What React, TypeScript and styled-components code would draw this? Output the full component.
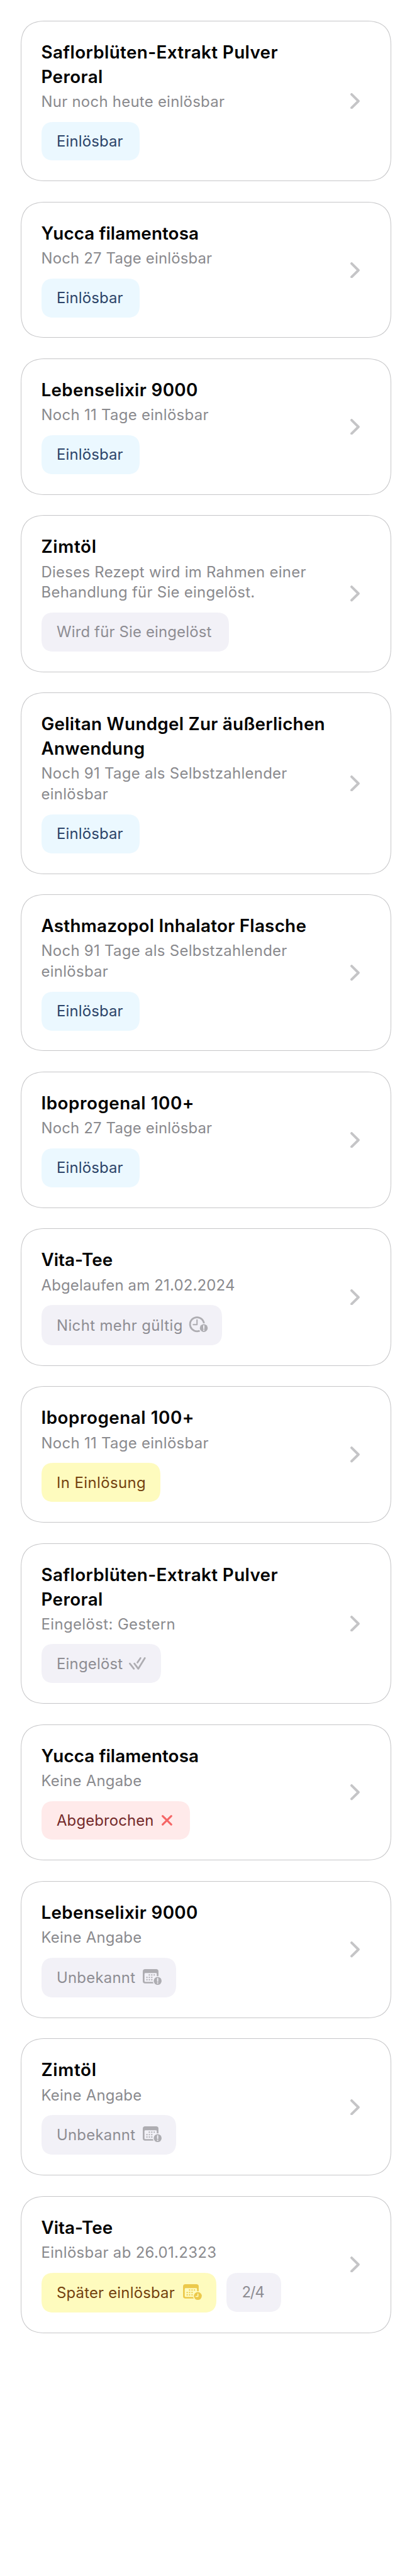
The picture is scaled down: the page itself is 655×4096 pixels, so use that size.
import React from 'react';
import styled, { createGlobalStyle } from 'styled-components';

const GlobalStyle = createGlobalStyle`
  body {
    margin: 0;
    background: #fff;
    font-family: Inter, 'Liberation Sans', sans-serif;
  }
`;

type Tone = 'blue' | 'gray' | 'yellow' | 'red';
type IconName = 'clockAlert' | 'doubleCheck' | 'cross' | 'calendarAlert' | 'calendarClock';

const tones: Record<Tone, { bg: string; fg: string; icon: string }> = {
  blue: { bg: '#ebf8ff', fg: '#2c4469', icon: '#2c4469' },
  gray: { bg: '#f2f1f7', fg: '#8e8d93', icon: '#aeadb2' },
  yellow: { bg: '#fefbbe', fg: '#74420f', icon: '#ecc94b' },
  red: { bg: '#ffeaea', fg: '#742a2a', icon: '#f56565' },
};

const List = styled.main`
  box-sizing: border-box;
  min-height: 4096px;
  padding: 32.75px;
  display: flex;
  flex-direction: column;
  gap: 32.58px;
`;

const Card = styled.article`
  flex: none;
  padding: 30px 48.8px 31.9px 31.75px;
  border: 1px solid #c6c6c8;
  border-radius: 41px;
  corner-shape: superellipse(1.38);
  display: flex;
  align-items: stretch;
  justify-content: space-between;
`;

const Content = styled.div`
  display: flex;
  flex-direction: column;
`;

const Title = styled.h2<{ $tracking: number }>`
  margin: 0;
  font-size: 27.8px;
  line-height: 38.9px;
  font-weight: 600;
  letter-spacing: ${(p) => p.$tracking}px;
  color: #000;
  white-space: pre;
`;

const Subtitle = styled.p<{ $tracking: number }>`
  margin: 4.4px 0 0;
  font-size: 23.9px;
  line-height: 32.75px;
  letter-spacing: ${(p) => p.$tracking}px;
  color: #8a8a8e;
  white-space: pre;
`;

const Pills = styled.div`
  margin-top: 14.8px;
  display: flex;
  align-items: flex-start;
  gap: 16.3px;
`;

const Pill = styled.span<{
  $tone: Tone;
  $width: number;
  $height?: number;
  $inset?: number;
  $tracking?: number;
}>`
  box-sizing: border-box;
  width: ${(p) => p.$width}px;
  height: ${(p) => p.$height ?? 61.9}px;
  padding: 0 ${(p) => p.$inset ?? 0}px 0 24.5px;
  border-radius: 20.5px;
  corner-shape: superellipse(1.38);
  display: flex;
  align-items: center;
  justify-content: space-between;
  font-size: 23.9px;
  letter-spacing: ${(p) => p.$tracking ?? 0.17}px;
  white-space: nowrap;
  background: ${(p) => tones[p.$tone].bg};
  color: ${(p) => tones[p.$tone].fg};
`;

const Glyph = styled.svg<{ $tone: Tone; $w: number; $h: number }>`
  flex: none;
  width: ${(p) => p.$w * 0.6823}px;
  height: ${(p) => p.$h * 0.6823}px;
  overflow: visible;
  color: ${(p) => tones[p.$tone].icon};
  --cutout: ${(p) => tones[p.$tone].bg};
`;

const Chevron = styled.svg`
  align-self: center;
  flex: none;
  width: 15px;
  height: 25.4px;
  /* content padding differs between top and bottom, so recentre on the card */
  margin-top: 2px;
`;

const AlertMark = () => (
  <>
    <path d="M0 -5.3V0.9" stroke="var(--cutout)" strokeWidth="2.9" strokeLinecap="round" />
    <circle cy="4.9" r="1.7" fill="var(--cutout)" />
  </>
);

const ClockMark = () => (
  <path
    d="M0.2 -5V1H-4.6"
    fill="none"
    stroke="var(--cutout)"
    strokeWidth="2.2"
    strokeLinecap="round"
    strokeLinejoin="round"
  />
);

const Badge = ({ x, y, children }: { x: number; y: number; children: React.ReactNode }) => (
  <g transform={`translate(${x} ${y})`}>
    <circle r="11.3" fill="var(--cutout)" />
    <circle r="9.2" fill="currentColor" />
    {children}
  </g>
);

const calendarDots = [
  [15.3, 13.7], [21, 13.7], [26.7, 13.7],
  [9.7, 19.3], [15.3, 19.3], [21, 19.3],
  [9.7, 24.8], [15.3, 24.8], [21, 24.8],
];

const Calendar = () => (
  <>
    <rect width="36.5" height="33.5" rx="5.5" fill="currentColor" />
    <rect x="4" y="9.3" width="28.6" height="20.4" rx="2" fill="var(--cutout)" />
    {calendarDots.map(([x, y]) => (
      <rect key={`${x}-${y}`} x={x - 1.5} y={y - 1.5} width="3" height="3" rx="0.6" fill="currentColor" />
    ))}
  </>
);

const glyphs: Record<IconName, { w: number; h: number; inset: number; art: React.ReactNode }> = {
  clockAlert: {
    w: 42.9,
    h: 40,
    inset: 22.3,
    art: (
      <>
        <circle cx="17.9" cy="18.6" r="16.3" fill="none" stroke="currentColor" strokeWidth="4" />
        <path
          d="M17.9 8.3V19.4H9.2"
          fill="none"
          stroke="currentColor"
          strokeWidth="3"
          strokeLinecap="round"
          strokeLinejoin="round"
        />
        <Badge x={33.7} y={27.4}><AlertMark /></Badge>
      </>
    ),
  },
  doubleCheck: {
    w: 39.3,
    h: 30,
    inset: 24.4,
    art: (
      <path
        d="M2 14.9L11.5 27M12.6 14.9L21.7 27L37 2.2M26.9 2.2L19.8 12.6"
        fill="none"
        stroke="currentColor"
        strokeWidth="4"
        strokeLinecap="round"
        strokeLinejoin="round"
      />
    ),
  },
  cross: {
    w: 24.7,
    h: 25,
    inset: 27.5,
    art: (
      <path
        d="M2.3 2.3L22.4 22.2M22.4 2.3L2.3 22.2"
        fill="none"
        stroke="currentColor"
        strokeWidth="4.6"
        strokeLinecap="round"
      />
    ),
  },
  calendarAlert: {
    w: 44,
    h: 39.6,
    inset: 23.4,
    art: (<><Calendar /><Badge x={34.7} y={27.4}><AlertMark /></Badge></>),
  },
  calendarClock: {
    w: 43.8,
    h: 39.6,
    inset: 23.3,
    art: (<><Calendar /><Badge x={34.5} y={27.6}><ClockMark /></Badge></>),
  },
};

interface Status {
  label: string;
  tone: Tone;
  width: number;
  height?: number;
  tracking?: number;
  icon?: IconName;
}

interface Prescription {
  title: string;
  titleTracking: number;
  info: string;
  infoTracking: number;
  pills: Status[];
}

const redeemable: Status = { label: 'Einlösbar', tone: 'blue', width: 156.2 };
const unknown: Status = {
  label: 'Unbekannt', tone: 'gray', width: 214.9, height: 63.1, tracking: 0.24, icon: 'calendarAlert',
};

const prescriptions: Prescription[] = [
  { title: 'Saflorblüten-Extrakt Pulver\nPeroral', titleTracking: 0.38, info: 'Nur noch heute einlösbar', infoTracking: 0.28, pills: [redeemable] },
  { title: 'Yucca filamentosa', titleTracking: 0.09, info: 'Noch 27 Tage einlösbar', infoTracking: 0.18, pills: [redeemable] },
  { title: 'Lebenselixir 9000', titleTracking: 0.36, info: 'Noch 11 Tage einlösbar', infoTracking: 0.32, pills: [redeemable] },
  {
    title: 'Zimtöl', titleTracking: 0.66,
    info: 'Dieses Rezept wird im Rahmen einer\nBehandlung für Sie eingelöst.', infoTracking: 0.29,
    pills: [{ label: 'Wird für Sie eingelöst', tone: 'gray', width: 298.3 }],
  },
  { title: 'Gelitan Wundgel Zur äußerlichen\nAnwendung', titleTracking: 0.28, info: 'Noch 91 Tage als Selbstzahlender\neinlösbar', infoTracking: 0.31, pills: [redeemable] },
  { title: 'Asthmazopol Inhalator Flasche', titleTracking: 0.27, info: 'Noch 91 Tage als Selbstzahlender\neinlösbar', infoTracking: 0.31, pills: [redeemable] },
  { title: 'Iboprogenal 100+', titleTracking: 0.54, info: 'Noch 27 Tage einlösbar', infoTracking: 0.18, pills: [redeemable] },
  {
    title: 'Vita-Tee', titleTracking: 0.05, info: 'Abgelaufen am 21.02.2024', infoTracking: 0.2,
    pills: [{ label: 'Nicht mehr gültig', tone: 'gray', width: 287, height: 63.9, tracking: 0.4, icon: 'clockAlert' }],
  },
  {
    title: 'Iboprogenal 100+', titleTracking: 0.54, info: 'Noch 11 Tage einlösbar', infoTracking: 0.32,
    pills: [{ label: 'In Einlösung', tone: 'yellow', width: 189.7, tracking: 0.41 }],
  },
  {
    title: 'Saflorblüten-Extrakt Pulver\nPeroral', titleTracking: 0.38, info: 'Eingelöst: Gestern', infoTracking: 0.4,
    pills: [{ label: 'Eingelöst', tone: 'gray', width: 190.4, tracking: 0.22, icon: 'doubleCheck' }],
  },
  {
    title: 'Yucca filamentosa', titleTracking: 0.09, info: 'Keine Angabe', infoTracking: 0.26,
    pills: [{ label: 'Abgebrochen', tone: 'red', width: 236.1, tracking: 0.14, icon: 'cross' }],
  },
  { title: 'Lebenselixir 9000', titleTracking: 0.36, info: 'Keine Angabe', infoTracking: 0.26, pills: [unknown] },
  { title: 'Zimtöl', titleTracking: 0.66, info: 'Keine Angabe', infoTracking: 0.26, pills: [unknown] },
  {
    title: 'Vita-Tee', titleTracking: 0.05, info: 'Einlösbar ab 26.01.2323', infoTracking: 0.34,
    pills: [
      { label: 'Später einlösbar', tone: 'yellow', width: 278.2, height: 63.1, tracking: 0.2, icon: 'calendarClock' },
      { label: '2/4', tone: 'gray', width: 87.3, tracking: -1.2 },
    ],
  },
];

const StatusPill = ({ label, tone, width, height, tracking, icon }: Status) => {
  const glyph = icon && glyphs[icon];
  return (
    <Pill $tone={tone} $width={width} $height={height} $tracking={tracking} $inset={glyph?.inset}>
      {label}
      {glyph && (
        <Glyph $tone={tone} $w={glyph.w} $h={glyph.h} viewBox={`0 0 ${glyph.w} ${glyph.h}`}>
          {glyph.art}
        </Glyph>
      )}
    </Pill>
  );
};

export default function App() {
  return (
    <>
      <GlobalStyle />
      <List>
        {prescriptions.map((p, i) => (
          <Card key={i}>
            <Content>
              <Title $tracking={p.titleTracking}>{p.title}</Title>
              <Subtitle $tracking={p.infoTracking}>{p.info}</Subtitle>
              <Pills>
                {p.pills.map((s) => <StatusPill key={s.label} {...s} />)}
              </Pills>
            </Content>
            <Chevron viewBox="0 0 22 37.2">
              <path
                d="M3 3L18.8 18.6L3 34.2"
                fill="none"
                stroke="#c5c5c7"
                strokeWidth="5.9"
                strokeLinecap="round"
                strokeLinejoin="round"
              />
            </Chevron>
          </Card>
        ))}
      </List>
    </>
  );
}
